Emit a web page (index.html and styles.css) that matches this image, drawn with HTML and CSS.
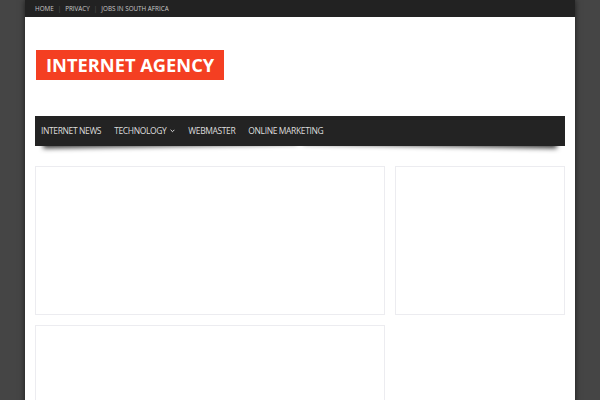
FILE: index.html
```
<!DOCTYPE html>
<html>
<head>
<meta charset="utf-8">
<link rel="stylesheet" href="styles.css">
</head>
<body>
<div class="page">
  <div class="topbar">
    <a class="toplink">HOME</a><span class="sep">|</span><a class="toplink">PRIVACY</a><span class="sep">|</span><a class="toplink">JOBS IN SOUTH AFRICA</a>
  </div>
  <div class="header">
    <div class="logo">INTERNET AGENCY</div>
  </div>
  <nav class="nav">
    <a class="navitem">INTERNET NEWS</a>
    <a class="navitem">TECHNOLOGY<svg class="chev" width="5" height="4" viewBox="0 0 5 4"><path d="M0.6 0.8 L2.5 2.7 L4.4 0.8" fill="none" stroke="#ddd" stroke-width="1"/></svg></a>
    <a class="navitem">WEBMASTER</a>
    <a class="navitem">ONLINE MARKETING</a>
  </nav>
  <div class="content">
    <div class="card main"></div>
    <div class="card side"></div>
    <div class="card main tall"></div>
  </div>
</div>
</body>
</html>
```
FILE: styles.css
```
html, body {
  margin: 0;
  padding: 0;
  background: #454545;
  height: 100%;
  overflow: hidden;
}
.page {
  position: relative;
  z-index: 0;
  width: 550px;
  margin: 0 auto;
  background: #fff;
  min-height: 400px;
  box-shadow: 0 0 6px rgba(0,0,0,0.6);
  font-family: "Open Sans", sans-serif;
}
.topbar {
  height: 17px;
  background: #222;
  display: flex;
  align-items: center;
  padding-left: 10px;
  font-size: 6.3px;
  color: #c8c8c8;
  box-sizing: border-box;
  padding-bottom: 1px;
}
.toplink { color: #c8c8c8; }
.sep { color: #555; margin: 0 4px; }
.header {
  padding: 33px 10px 0 11px;
  height: 99px;
  box-sizing: border-box;
}
.logo {
  display: inline-block;
  background: #f43f22;
  color: #fff;
  font-weight: 700;
  font-size: 18.3px;
  line-height: 30px;
  height: 30px;
  padding: 0 10px;
}
.nav {
  position: relative;
  margin: 0 10px;
  height: 30px;
  background: #232323;
  display: flex;
  align-items: center;
  padding-left: 6px;
  padding-bottom: 2px;
  box-sizing: border-box;
  gap: 13px;
}
.nav::before, .nav::after {
  content: "";
  position: absolute;
  z-index: -1;
  bottom: 6px;
  width: 48%;
  height: 10px;
  box-shadow: 0 6px 5px rgba(0,0,0,0.8);
}
.nav::before { left: 8px; transform: rotate(-1deg); }
.nav::after { right: 8px; transform: rotate(1deg); }
.navitem {
  color: #dddddd;
  font-size: 8.5px;
  letter-spacing: -0.38px;
  display: flex;
  align-items: center;
  gap: 4px;
}
.chev { margin-top: 2px; }
.content {
  display: grid;
  grid-template-columns: 350px 170px;
  column-gap: 10px;
  row-gap: 10px;
  padding: 20px 10px 0;
}
.card {
  border: 1px solid #ececf0;
  box-sizing: border-box;
  height: 149px;
  background: #fff;
}
.tall { height: 120px; grid-column: 1; }
```
